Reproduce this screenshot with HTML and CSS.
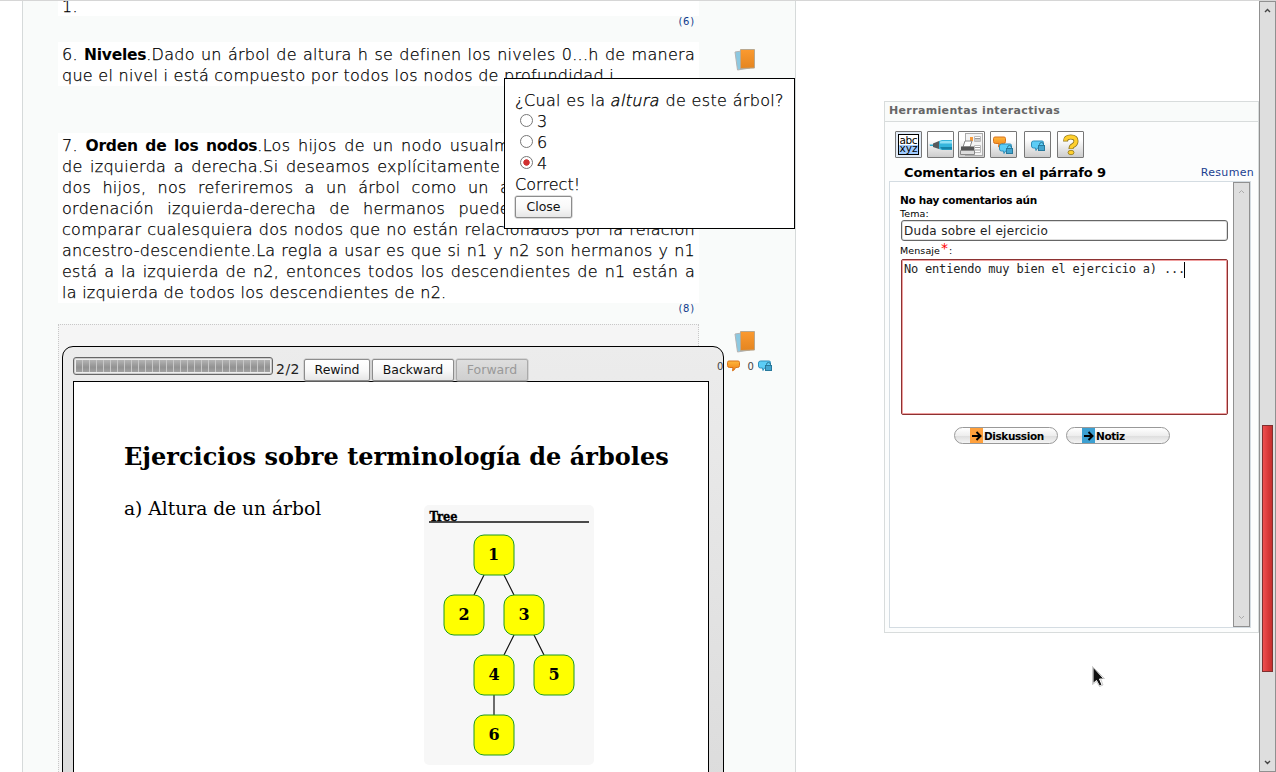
FILE: index.html
```html
<!DOCTYPE html>
<html lang="es">
<head>
<meta charset="utf-8">
<title>Terminología de árboles</title>
<link rel="stylesheet" href="styles.css">
</head>
<body>
<svg class="defs" width="0" height="0">
  <defs>
    <linearGradient id="or" x1="0" y1="0" x2="0" y2="1"><stop offset="0" stop-color="#ffb83e"/><stop offset="1" stop-color="#f07c10"/></linearGradient>
    <linearGradient id="bk" x1="0" y1="0" x2="0" y2="1"><stop offset="0" stop-color="#fb9a30"/><stop offset="1" stop-color="#e48520"/></linearGradient>
    <symbol id="books" viewBox="0 0 22 24">
      <path d="M1 4 L14 2 L16 20 L3.500 22 Z" fill="#8cc8e0" stroke="#b4b4b4"/>
      <path d="M6.500 1.500 H20.500 V20 L6.500 20.500 Z" fill="url(#bk)" stroke="#b9a88f"/>
    </symbol>
    <symbol id="talk" viewBox="0 0 13 12">
      <path d="M2 1 H11 Q12.500 1 12.500 2.500 V5.500 Q12.500 7.500 10.500 7.500 H8.500 Q8 10 5.500 10.800 L6 7.500 H2.500 Q.5 7.500 .5 5.500 V2.500 Q.5 1 2 1 Z" fill="url(#or)" stroke="#d9721a"/>
    </symbol>
    <symbol id="lock" viewBox="0 0 15 12">
      <path d="M2.500 1 H11 Q12.500 1 12.500 2.500 V8 H6.500 L5 10.500 L4.500 8 H2.500 Q.5 8 .5 6 V3 Q.5 1 2.500 1 Z" fill="#5ccdf6" stroke="#2e8fbb"/>
      <path d="M8.500 6 V4.500 Q8.500 2.500 10.500 2.500 Q12.500 2.500 12.500 4.500 V6" fill="none" stroke="#2d7797"/>
      <rect x="7.500" y="5.500" width="6" height="5" fill="#43a5cf" stroke="#28799c"/>
    </symbol>
  </defs>
</svg>
<div class="page">
  <main class="doc">
    <div class="column">
      <div class="para first"><span class="line">1.</span></div>
      <div class="ref ref6">(6)</div>
      <div class="para">
        <span class="line just">6. <b>Niveles</b>.Dado un árbol de altura h se definen los niveles 0...h de manera</span>
        <span class="line">que el nivel i está compuesto por todos los nodos de profundidad i.</span>
      </div>
      <div class="para seven">
        <span class="line just">7. <b>Orden de los nodos</b>.Los hijos de un nodo usualmente están ordenados</span>
        <span class="line just">de izquierda a derecha.Si deseamos explícitamente ignorar el orden entre</span>
        <span class="line just">dos hijos, nos referiremos a un árbol como un árbol no ordenado. Si</span>
        <span class="line just">ordenación izquierda-derecha de hermanos puede ser extendida para</span>
        <span class="line just">comparar cualesquiera dos nodos que no están relacionados por la relación</span>
        <span class="line just">ancestro-descendiente.La regla a usar es que si n1 y n2 son hermanos y n1</span>
        <span class="line just">está a la izquierda de n2, entonces todos los descendientes de n1 están a</span>
        <span class="line">la izquierda de todos los descendientes de n2.</span>
      </div>
      <div class="ref ref8">(8)</div>
      <section class="embed">
        <div class="player">
          <div class="controls">
            <div class="progress"><div class="fill"></div></div>
            <span class="count">2/2</span>
            <button class="btn rewind">Rewind</button>
            <button class="btn backward">Backward</button>
            <button class="btn forward" disabled>Forward</button>
          </div>
          <div class="slide">
            <h1>Ejercicios sobre terminología de árboles</h1>
            <div class="task">
              <p>a) Altura de un árbol</p>
              <svg class="tree" width="170" height="262" viewBox="424 504 170 262">
                <rect x="424" y="505" width="170" height="260" rx="5" fill="#f7f7f7"/>
                <text class="cap" x="429.500" y="520.500" textLength="28" lengthAdjust="spacingAndGlyphs">Tree</text>
                <path d="M429 522H589" stroke="#111" stroke-width="1.500"/>
                <path d="M484 575 L474 595 M504 575 L514 595 M514 635 L504 655 M534 635 L544 655 M494 695 V715" stroke="#111" stroke-width="1.200"/>
                <g fill="#ff0" stroke="#1d9a1d">
                  <rect x="474" y="535" width="40" height="40" rx="10"/>
                  <rect x="444" y="595" width="40" height="40" rx="10"/>
                  <rect x="504" y="595" width="40" height="40" rx="10"/>
                  <rect x="474" y="655" width="40" height="40" rx="10"/>
                  <rect x="534" y="655" width="40" height="40" rx="10"/>
                  <rect x="474" y="715" width="40" height="40" rx="10"/>
                </g>
                <g class="num">
                  <text x="493.500" y="560">1</text><text x="464" y="620">2</text><text x="524" y="620">3</text>
                  <text x="494" y="680">4</text><text x="554" y="680">5</text><text x="494" y="740">6</text>
                </g>
              </svg>
            </div>
          </div>
        </div>
      </section>
    </div>
    <div class="notes">
      <svg class="books" width="22" height="24"><use href="#books"/></svg>
      <svg class="books second" width="22" height="24"><use href="#books"/></svg>
      <div class="counts"><span>0</span><svg width="13" height="12"><use href="#talk"/></svg><span class="n2">0</span><svg width="15" height="12"><use href="#lock"/></svg></div>
    </div>
  </main>

  <aside class="tools">
    <h2>Herramientas interactivas</h2>
    <div class="icons">
      <span class="ico blue"><svg width="25" height="25" viewBox="0 0 25 25"><rect x="2.500" y="2.500" width="20" height="20" fill="#fff" stroke="#000"/><rect x="3" y="13" width="19" height="9" fill="#a0cbff"/><text class="abc" x="3.500" y="11.500" textLength="18">abc</text><text class="abc" x="3.500" y="20" textLength="18">xyz</text></svg></span>
      <span class="ico i2"><svg width="25" height="25" viewBox="0 0 25 25"><path d="M1.500 12.500 H6 V14 L2 14Z" fill="#28acd0"/><path d="M5 11.500 L11 9 V17 L5 15Z" fill="#565b5e"/><path d="M11 9 L14 8 H24 V18 H14 L11 17Z" fill="#35b5dc"/><path d="M12 9.500 L14 9 H24 V11.500 H12Z" fill="#8fe0f5"/><path d="M12 15 H24 V17.500 H14Z" fill="#1683a8"/></svg></span>
      <span class="ico i3"><svg width="25" height="25" viewBox="0 0 25 25"><rect x="6.500" y="1.500" width="17" height="22" fill="#f4f4f4" stroke="#aaa"/><path d="M11 5 H14 V9 H11Z" fill="#f59a3c"/><path d="M15.500 4.500 H21.500 V9.500 H15.500Z M15.500 13.500 H21.500 V20.500 H15.500Z" fill="#fff" stroke="#bbb"/><path d="M16 6.500h5M16 8h5M16 15.500h5M16 18h5" stroke="#999"/><path d="M6 9 H13 L11 15 H4Z" fill="#fff" stroke="#888"/><path d="M2 14.500 H15 V19 H2Z" fill="#555"/><path d="M1.500 18.500 H15.500 V22.500 H1.500Z" fill="#ddd" stroke="#888"/></svg></span>
      <span class="ico i4"><svg width="25" height="25" viewBox="0 0 25 25"><svg x="2" y="4" width="13" height="12"><use href="#talk"/></svg><svg x="8" y="11" width="15" height="12"><use href="#lock"/></svg></svg></span>
      <span class="ico i5"><svg width="25" height="25" viewBox="0 0 25 25"><svg x="6" y="8" width="15" height="12"><use href="#lock"/></svg></svg></span>
      <span class="ico i6"><svg width="25" height="25" viewBox="0 0 25 25"><path d="M7.500 9.500 Q7.500 5 12.800 5 Q18 5 18 9 Q18 12 15 13.500 Q13 14.500 13 17" fill="none" stroke="#8c7420" stroke-width="5"/><path d="M7.500 8.800 Q7.500 5 12.800 5 Q18 5 18 9 Q18 12 15 13.500 Q13 14.500 13 16.500" fill="none" stroke="#ffd02e" stroke-width="3.400"/><ellipse cx="13" cy="20.500" rx="3" ry="2.200" fill="#ffd02e" stroke="#8c7420" stroke-width=".8"/></svg></span>
    </div>
    <div class="heading"><h3>Comentarios en el párrafo 9</h3><a>Resumen</a></div>
    <div class="panel">
      <form class="form">
        <strong>No hay comentarios aún</strong>
        <label class="tema">Tema:</label>
        <div class="input"><span>Duda sobre el ejercicio</span></div>
        <label class="msg">Mensaje<sup>*</sup>:</label>
        <div class="area"><span>No entiendo muy bien el ejercicio a) ...</span><i class="caret"></i></div>
        <div class="actions">
          <span class="pill"><svg width="13" height="15"><rect width="13" height="15" fill="#ffa03c"/><path d="M2 8H10M6.500 4L10.500 8L6.500 12" fill="none" stroke="#000" stroke-width="2"/></svg><b>Diskussion</b></span>
          <span class="pill"><svg width="13" height="15"><rect width="13" height="15" fill="#3ca0d2"/><path d="M2 8H10M6.500 4L10.500 8L6.500 12" fill="none" stroke="#000" stroke-width="2"/></svg><b>Notiz</b></span>
        </div>
      </form>
      <div class="bar inner">
        <svg width="7" height="5"><path d="M1 4L3.500 1.500L6 4" fill="none" stroke="#aaa"/></svg>
        <svg width="7" height="5"><path d="M1 1L3.500 3.500L6 1" fill="none" stroke="#aaa"/></svg>
      </div>
    </div>
  </aside>

  <div class="bar outer">
    <svg width="7" height="5"><path d="M1 4L3.500 1.500L6 4" fill="none" stroke="#444" stroke-width="1.400"/></svg>
    <div class="thumb"></div>
    <svg width="7" height="5"><path d="M1 1L3.500 3.500L6 1" fill="none" stroke="#444" stroke-width="1.400"/></svg>
  </div>

  <div class="popup">
    <div class="q">¿Cual es la <em>altura</em> de este árbol?</div>
    <div class="opt"><i class="radio"></i>3</div>
    <div class="opt"><i class="radio"></i>6</div>
    <div class="opt"><i class="radio on"></i>4</div>
    <div class="ok">Correct!</div>
    <button class="btn close">Close</button>
  </div>
  <svg class="cursor" width="14" height="22" viewBox="0 0 14 22"><path d="M1 1 V17.500 L4.500 14.500 L7.500 20 L10 19 L7.500 13 H12Z" fill="#111" stroke="#fff"/><path d="M.5 .5 L12.500 12.500 H8.500 L11 19 L7.500 20.500 L4.500 15.500 L.5 18.500Z" fill="none" stroke="#999" stroke-width=".5"/></svg>
</div>
</body>
</html>
```
FILE: styles.css
```css
* { box-sizing: border-box; }
body { margin: 0; background: #fff; font-family: "DejaVu Sans", sans-serif; color: #000; overflow: hidden; }
h1, h2, h3, p { margin: 0; }
.defs { position: absolute; }
.page { position: relative; display: flex; width: 1276px; height: 772px; overflow: hidden; border-top: 1px solid #d6d6d6; }

/* document */
.doc { display: flex; width: 774px; height: 771px; margin-left: 22px; padding-left: 35px; background: #f9fbfa; border: solid #d6dada; border-width: 0 1px; }
.column { width: 641px; flex: none; }
.para { background: #fff; padding: 2px 4px 0; height: 44px; }
.para.first { height: 15px; padding-top: 0; overflow: hidden; }
.para.first .line { margin-top: -5px; }
.para.seven { height: 170px; margin-top: 47px; }
.line { display: block; height: 21px; line-height: 21px; font-size: 16px; font-weight: 200; white-space: nowrap; letter-spacing: .270px; -webkit-text-stroke: .250px #000; }
.line b { font-weight: 700; font-size: 15.500px; letter-spacing: -.250px; -webkit-text-stroke: 0; }
.just { text-align: justify; text-align-last: justify; }
.ref { height: 26px; padding: 0 4px; text-align: right; font-size: 10px; line-height: 11px; color: #103c8c; letter-spacing: .8px; }
.ref8 { height: 21px; }
.embed { height: 460px; background: #f5f5f5; border: 1px dotted #c8c8c8; padding: 21px 0 0 3px; }
.player { position: relative; z-index: 1; width: 662px; height: 440px; border: 1px solid #000; border-radius: 11px 11px 0 0; background: linear-gradient(#ececec, #dcdcdc); padding: 10px 0 0 10px; }
.controls { display: flex; align-items: flex-start; height: 24px; }
.progress { width: 200px; height: 18px; border: 1px solid #666; border-radius: 3px; background: #eee; padding: 2px; box-shadow: inset 0 0 0 1px #ccc; }
.fill { height: 12px; background: repeating-linear-gradient(90deg, transparent 0 6px, #c8c8c8 6px 7px), linear-gradient(#b4b4b4, #929292 60%, #a0a0a0); }
.count { width: 31px; padding: 4px 0 0 3px; font-size: 14px; line-height: 17px; color: #222; letter-spacing: .5px; }
.btn { height: 22px; border: 1px solid #8c8c8c; border-radius: 2px; background: linear-gradient(#fff, #f8f8f8 55%, #e6e6e6); box-shadow: 0 0 0 .5px #bbb; padding: 0; font: 12.500px/18px "DejaVu Sans", sans-serif; color: #111; }
.controls .btn { margin-top: 1.500px; margin-right: 2px; }
.rewind { width: 66px; }
.rewind, .backward { letter-spacing: -.1px; }
.backward { width: 82px; }
.forward { width: 72px; background: linear-gradient(#dedede, #cfcfcf); border-color: #aaa; color: #999; }
.slide { width: 636px; height: 410px; border: 1px solid #000; background: #fff; padding: 58px 0 0 50px; }
.slide h1 { font: bold 24px/34px "DejaVu Serif", serif; white-space: nowrap; letter-spacing: .02px; }
.task { display: flex; margin-top: 30px; }
.task p { width: 300px; font: 18.650px/28px "DejaVu Serif", serif; white-space: nowrap; margin-top: -9px; }
.tree { display: block; }
.cap { font: bold 12.500px "DejaVu Serif", serif; stroke: #000; stroke-width: .4px; }
.num { font: bold 16px "DejaVu Serif", serif; text-anchor: middle; }

.notes { padding: 47px 0 0 35px; width: 96px; }
.books { display: block; }
.second { margin-top: 258px; }
.counts { display: flex; align-items: center; margin: 5px 0 0 -17px; width: 64px; font-size: 10px; color: #444; position: relative; z-index: 2; height: 14px; }
.counts svg { margin-left: 4px; flex: none; }
.n2 { margin-left: 7px; }

/* tool panel */
.tools { width: 375px; height: 532px; margin: 100px 0 0 88px; background: #fcfdfd; border: 1px solid #d8dcdc; flex: none; }
.tools h2 { height: 20px; padding-left: 4px; font-size: 11px; line-height: 17px; color: #666; background: #f9fbfa; border-bottom: 1px solid #d8dcdc; letter-spacing: .350px; }
.icons { display: flex; padding: 9px 0 0 10px; }
.ico { width: 27px; height: 27px; border: 1px solid #777; background: linear-gradient(#fff 30%, #cdcdcd); border-radius: 1px; }
.blue { background: #e2ebf6; }
.ico svg { display: block; }
.i2 { margin-left: 5px; } .i3 { margin-left: 4px; } .i4 { margin-left: 5px; } .i5 { margin-left: 7px; } .i6 { margin-left: 6px; }
.abc { font: 10.500px "DejaVu Sans", sans-serif; }
.heading { display: flex; justify-content: space-between; height: 23px; padding: 6px 4px 0 19px; }
.heading h3 { font-size: 13px; line-height: 17px; letter-spacing: -.130px; }
.heading a { font-size: 11px; line-height: 18px; color: #1a4090; letter-spacing: .3px; }
.panel { display: flex; justify-content: space-between; width: 362px; height: 447px; margin-left: 4px; background: #fff; border: 1px solid #d4dce2; }
.form { width: 327px; margin-left: 11px; padding-top: 11px; display: flex; flex-direction: column; }
.form strong { font-size: 10.500px; line-height: 14px; white-space: nowrap; letter-spacing: -.3px; margin-left: -1px; }
.form label { font-size: 9.500px; white-space: nowrap; letter-spacing: .1px; margin-left: -1px; }
.tema { line-height: 13px; height: 13px; }
.input { height: 21px; border: 1px solid #666; border-radius: 3px; box-shadow: inset 0 0 0 1px #ddd; padding-left: 2px; font-size: 12px; line-height: 20px; color: #222; letter-spacing: .3px; }
.msg { height: 18px; line-height: 20px; }
.msg sup { color: #f00; font-size: 14px; line-height: 0; vertical-align: 1px; margin-left: 1px; letter-spacing: 1px; }
.area { height: 156px; border: 1px solid #8c3232; border-radius: 2px; box-shadow: inset 0 0 0 1px #f0a0a0; display: flex; padding: 2px 0 0 2px; font: 12px/15px "DejaVu Sans Mono", monospace; color: #222; letter-spacing: -.2px; white-space: nowrap; }
.caret { width: 1px; height: 16px; background: #000; margin-left: -1px; }
.actions { display: flex; gap: 8px; margin: 12px -10px 0 53px; }
.pill { flex: none; display: flex; align-items: center; width: 104px; height: 17px; padding-left: 15px; border: 1px solid #999; border-radius: 9px; background: linear-gradient(#fff, #eee 50%, #ddd 52%, #f4f4f4); font-size: 10.500px; letter-spacing: -.4px; }
.pill b { margin-left: 1px; }

/* scrollbars */
.bar { display: flex; flex-direction: column; align-items: center; justify-content: space-between; width: 17px; background: #dedede; border: 1px solid #909090; padding: 6px 0; flex: none; }
.outer { height: 771px; justify-content: flex-start; }
.thumb { width: 11px; height: 247px; margin: 412px 0 88px; border: 1px solid #803030; background: linear-gradient(90deg, #ee5050, #d83838 60%, #c43030); flex: none; }
.bar svg { flex: none; }

/* quiz dialog */
.popup { position: absolute; z-index: 5; left: 504px; top: 77px; width: 291px; height: 151px; border: 1px solid #000; background: #fff; padding: 11px 0 0 10px; font-size: 16px; font-weight: 200; line-height: 21px; white-space: nowrap; -webkit-text-stroke: .250px #000; }
.q { letter-spacing: .340px; }
.q em { display: inline-block; font-style: normal; transform: skewX(-12deg); -webkit-text-stroke: .35px #000; }
.opt { display: flex; height: 21px; padding-left: 5px; }
.radio { width: 13px; height: 13px; margin: 3px 4px 0 0; border: 1px solid #777; border-radius: 50%; background: #fff; }
.on { background: radial-gradient(circle, #d03030 0 2.800px, #fff 3.600px); }
.close { display: block; width: 57px; margin-top: 1px; -webkit-text-stroke: 0; }
.cursor { position: absolute; left: 1092px; top: 665px; }
```
